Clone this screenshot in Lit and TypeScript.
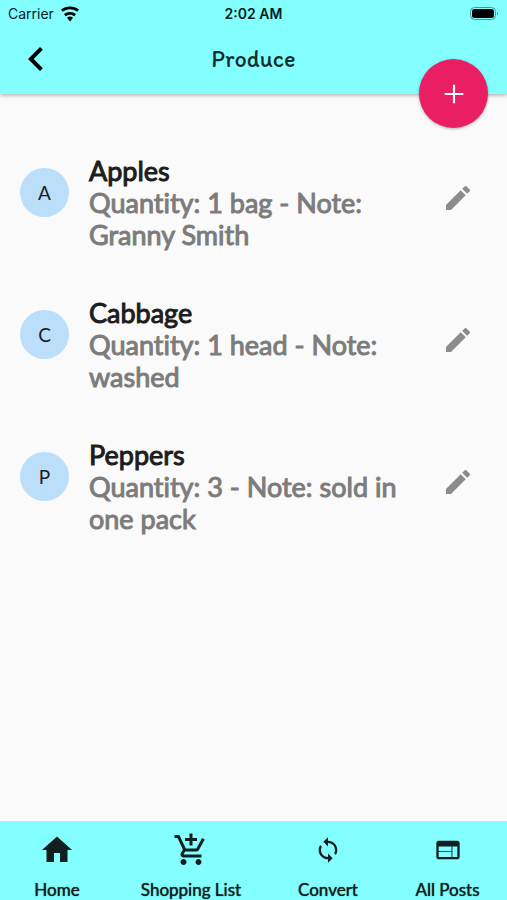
import { LitElement, html, css, svg } from "lit";
import { customElement, state } from "lit/decorators.js";

interface Item {
  name: string;
  quantity: string;
  note: string;
}

const paths = {
  wifi: "M12 21l3.6-4.6a6 6 0 0 0-7.2 0zM12 3C7.95 3 4.2 4.34 1.2 6.6L3.2 9.2C5.65 7.4 8.7 6.3 12 6.3s6.35 1.1 8.8 2.9l2-2.6C19.8 4.34 16.05 3 12 3zm0 6.6c-2.7 0-5.2.9-7.2 2.4l2 2.6c1.45-1.1 3.2-1.8 5.2-1.8s3.75.7 5.2 1.8l2-2.6C17.2 10.5 14.7 9.6 12 9.6z",
  back: "M15.41 16.59L10.83 12l4.58-4.59L14 6l-6 6 6 6z",
  add: "M19 12.8h-6.2V19h-1.6v-6.2H5v-1.6h6.2V5h1.6v6.2H19z",
  edit: "M3 17.25V21h3.75L17.81 9.94l-3.75-3.75L3 17.25zM20.71 7.04c.39-.39.39-1.02 0-1.41l-2.34-2.34c-.39-.39-1.02-.39-1.41 0l-1.83 1.83 3.75 3.75 1.83-1.83z",
  home: "M10 20v-6h4v6h5v-8h3L12 3 2 12h3v8z",
  cart: "M11 9h2V6h3V4h-3V1h-2v3H8v2h3v3zm-4 9c-1.1 0-1.99.9-1.99 2S5.9 22 7 22s2-.9 2-2-.9-2-2-2zm10 0c-1.1 0-1.99.9-1.99 2s.89 2 1.99 2 2-.9 2-2-.9-2-2-2zm-9.83-3.25l.03-.12.9-1.63h7.45c.75 0 1.41-.41 1.75-1.03l3.86-7.01L19.42 4h-.01l-1.1 2-2.76 5H8.53l-.13-.27L6.16 6l-.95-2-.94-2H1v2h2l3.6 7.59-1.35 2.45c-.16.28-.25.61-.25.96 0 1.1.9 2 2 2h12v-2H7.42c-.13 0-.25-.11-.25-.25z",
  sync: "M12 4V1L8 5l4 4V6c3.31 0 6 2.69 6 6 0 1.01-.25 1.97-.7 2.8l1.46 1.46C19.54 15.03 20 13.57 20 12c0-4.42-3.58-8-8-8zm0 14c-3.31 0-6-2.69-6-6 0-1.01.25-1.97.7-2.8L5.24 7.74C4.46 8.97 4 10.43 4 12c0 4.42 3.58 8 8 8v3l4-4-4-4v3z",
  web: "M20 4H4c-1.1 0-1.99.9-1.99 2L2 18c0 1.1.9 2 2 2h16c1.1 0 2-.9 2-2V6c0-1.1-.9-2-2-2zm-5 14H4v-4.2h11v4.2zm0-5H4V9h11v4zm5 5h-4.2V9H20v9z",
};

type IconName = keyof typeof paths;

const icon = (name: IconName, size: string) => html`
  <svg class="icon ${size}" viewBox="0 0 24 24" aria-hidden="true">
    ${svg`<path d=${paths[name]}></path>`}
  </svg>
`;

@customElement("app-root")
export class AppRoot extends LitElement {
  static styles = css`
    :host {
      display: flex;
      flex-direction: column;
      min-height: 100vh;
      background: #fafafa;
      color: #1d1d1d;
      font-family: Lato, sans-serif;
      font-variant-ligatures: none;
    }
    * {
      box-sizing: border-box;
    }
    button {
      border: 0;
      padding: 0;
      background: none;
      color: inherit;
      font: inherit;
      cursor: pointer;
      display: grid;
      place-items: center;
    }
    .icon {
      display: block;
      fill: currentColor;
    }
    .s20 { width: 20px; height: 20px; }
    .s28 { width: 28px; height: 28px; }
    .s32 { width: 32px; height: 32px; }
    .s36 { width: 36px; height: 36px; }
    .s48 { width: 48px; height: 48px; }

    .top {
      position: relative;
      background: #84ffff;
      box-shadow: 0 1px 4px rgba(0, 0, 0, 0.35);
    }
    .status {
      display: grid;
      grid-template-columns: 1fr auto 1fr;
      align-items: center;
      height: 28px;
      padding: 0 8px;
      font: 14px/20px Inter, sans-serif;
      color: #06201f;
    }
    .carrier {
      display: flex;
      align-items: center;
      gap: 6px;
    }
    .carrier .icon { color: #000; }
    .time { font-weight: 600; }
    .battery {
      justify-self: end;
      width: 30px;
      height: 14px;
    }
    .bar {
      display: grid;
      grid-template-columns: 56px 1fr 56px;
      align-items: center;
      height: 66px;
      padding: 0 8px 4px;
    }
    .back { height: 48px; color: #000; }
    h1 {
      margin: 0;
      text-align: center;
      font: 400 24px/32px "Itim", "Handlee", cursive;
      color: #10302f;
    }
    .add {
      position: absolute;
      right: 19px;
      bottom: -34px;
      width: 69px;
      height: 69px;
      border-radius: 50%;
      background: #e91e63;
      color: #fff;
      box-shadow: 0 1px 3px rgba(0, 0, 0, 0.3);
    }

    main { flex: 1; }
    ul {
      list-style: none;
      margin: 0;
      padding: 61px 21px 61px 20px;
      display: flex;
      flex-direction: column;
      gap: 46px;
    }
    .item {
      display: grid;
      grid-template-columns: 49px 1fr 56px;
      column-gap: 20px;
    }
    .avatar {
      width: 49px;
      height: 49px;
      margin-top: 13px;
      border-radius: 50%;
      background: #bbdefb;
      display: grid;
      place-items: center;
      font-size: 19px;
    }
    .text {
      font-size: 27px;
      line-height: 32px;
    }
    h2, p {
      margin: 0;
      font: inherit;
      -webkit-text-stroke: 1px currentColor;
    }
    p { color: #7c7c7c; }
    .edit {
      height: 48px;
      margin-top: 19px;
      color: #8c8c8c;
    }

    nav {
      display: grid;
      grid-template-columns: 114fr 154fr 120fr 119fr;
      height: 79px;
      background: #84ffff;
      color: #102020;
    }
    nav a {
      display: flex;
      flex-direction: column;
      align-items: center;
      color: inherit;
      text-decoration: none;
      font-size: 17px;
      line-height: 20px;
      text-shadow: 0 0 1px currentColor;
    }
    .slot {
      display: grid;
      place-items: center;
      height: 59px;
      padding-bottom: 2px;
    }
  `;

  @state() private items: Item[] = [
    { name: "Apples", quantity: "1 bag", note: "Granny Smith" },
    { name: "Cabbage", quantity: "1 head", note: "washed" },
    { name: "Peppers", quantity: "3", note: "sold in one pack" },
  ];

  private tabs: { label: string; icon: IconName; size: string }[] = [
    { label: "Home", icon: "home", size: "s36" },
    { label: "Shopping List", icon: "cart", size: "s36" },
    { label: "Convert", icon: "sync", size: "s28" },
    { label: "All Posts", icon: "web", size: "s28" },
  ];

  render() {
    return html`
      <header class="top">
        <div class="status">
          <span class="carrier">Carrier ${icon("wifi", "s20")}</span>
          <span class="time">2:02 AM</span>
          <svg class="battery" viewBox="0 0 30 14" aria-hidden="true">
            <rect x="1.5" y="0.5" width="25" height="12" rx="4" fill="none" stroke="#4d9494"></rect>
            <rect x="3" y="2" width="22" height="9" rx="2.5" fill="#000"></rect>
            <path d="M28 4.5q2 2 0 4z" fill="#4d9494"></path>
          </svg>
        </div>
        <div class="bar">
          <button class="back" aria-label="Back">${icon("back", "s48")}</button>
          <h1>Produce</h1>
        </div>
        <button class="add" aria-label="Add item">${icon("add", "s32")}</button>
      </header>
      <main>
        <ul>
          ${this.items.map(
            (item) => html`
              <li class="item">
                <span class="avatar" aria-hidden="true">${item.name[0]}</span>
                <div class="text">
                  <h2>${item.name}</h2>
                  <p>Quantity: ${item.quantity} - Note: ${item.note}</p>
                </div>
                <button class="edit" aria-label="Edit ${item.name}">${icon("edit", "s32")}</button>
              </li>
            `
          )}
        </ul>
      </main>
      <nav>
        ${this.tabs.map(
          (tab) => html`
            <a href="#"><span class="slot">${icon(tab.icon, tab.size)}</span>${tab.label}</a>
          `
        )}
      </nav>
    `;
  }
}
